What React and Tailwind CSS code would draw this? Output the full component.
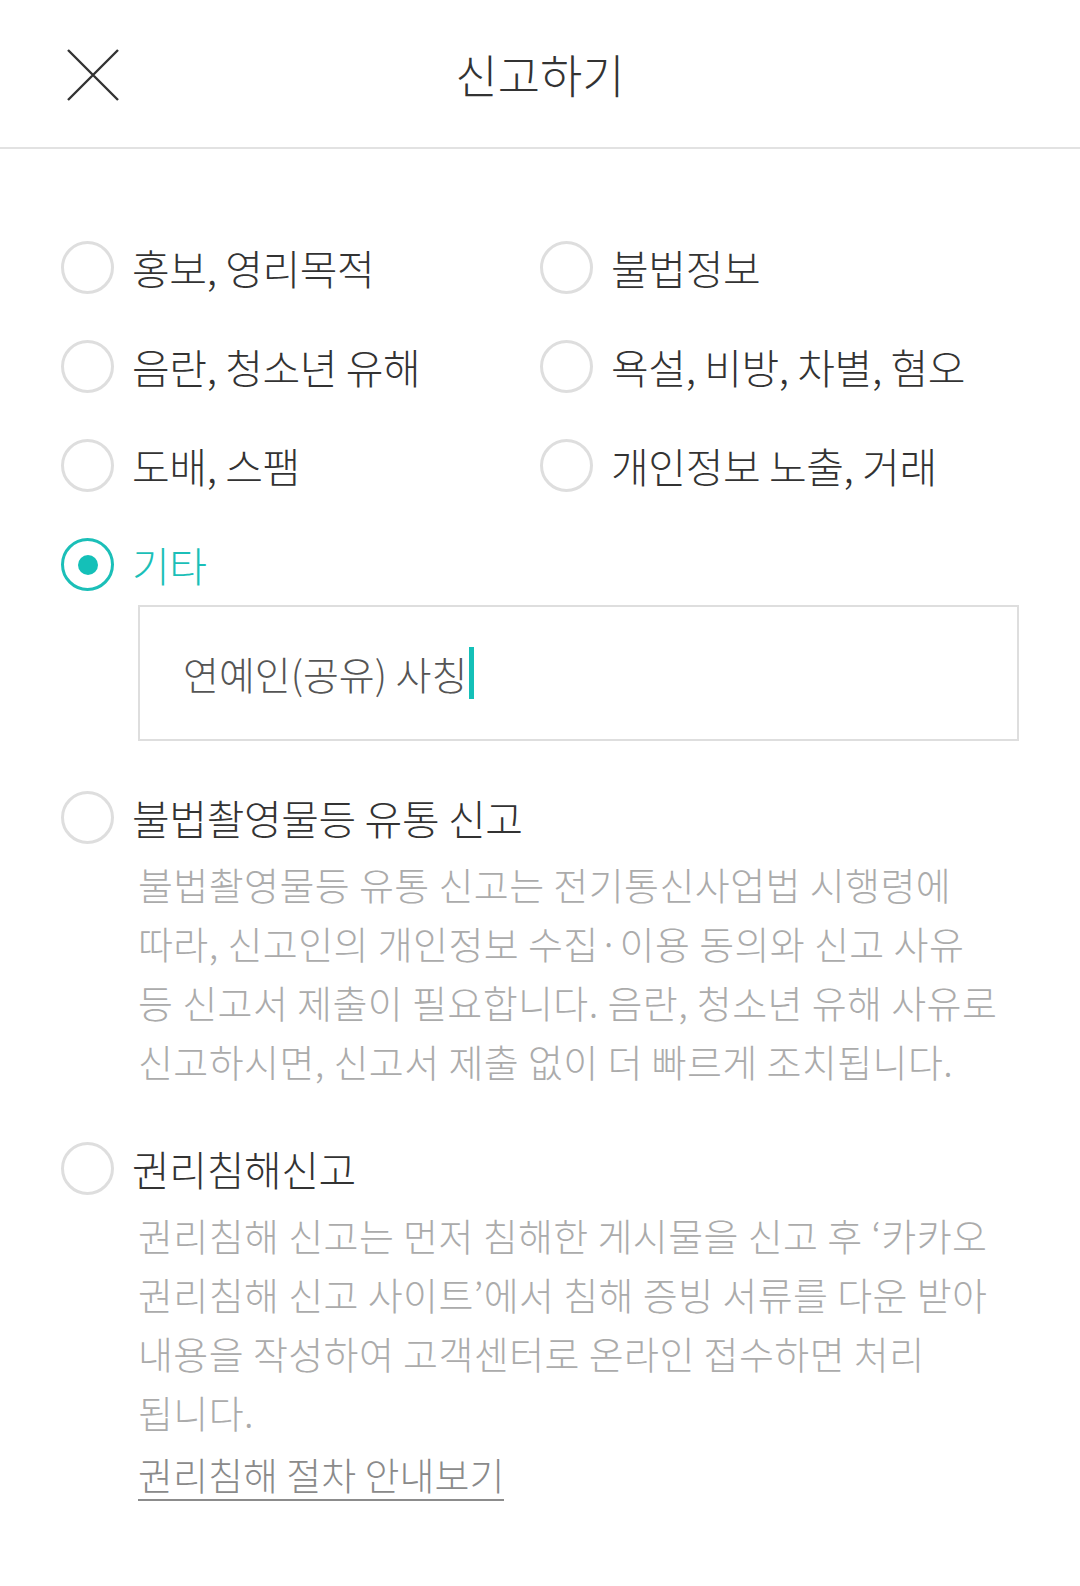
import React from "react";

const FONT = { fontFamily: '"Noto Sans CJK KR", "Noto Sans", sans-serif' };

function Radio({ checked }) {
  return (
    <span
      className={
        "flex h-[53px] w-[53px] shrink-0 items-center justify-center rounded-full border-[3px] " +
        (checked ? "border-[#1bbfb8]" : "border-[#dedede]")
      }
    >
      {checked && <span className="h-[20px] w-[20px] rounded-full bg-[#14c0b8]" />}
    </span>
  );
}

function Option({ label, checked }) {
  return (
    <div className="flex h-[53px] items-center gap-[18px]">
      <Radio checked={checked} />
      <span
        className={
          "whitespace-nowrap text-[41px] font-light tracking-[-0.4px] " +
          (checked ? "text-[#1bbfb8]" : "text-[#333333]")
        }
      >
        {label}
      </span>
    </div>
  );
}

function Desc({ lines }) {
  return (
    <div className="mt-[10px] flex flex-col pl-[77px] text-[38px] font-light leading-[59px] tracking-[0.4px] text-[#ababab]">
      {lines.map((l, i) => (
        <span key={i} className="whitespace-nowrap">
          {l}
        </span>
      ))}
    </div>
  );
}

export default function App() {
  return (
    <div className="min-h-[1586px] w-[1080px] bg-white" style={FONT}>
      <header className="relative flex h-[149px] items-center justify-center border-b-2 border-[#e2e2e2]">
        <button className="absolute left-[67px] top-[49px] h-[52px] w-[52px]">
          <svg viewBox="0 0 52 52" className="h-[52px] w-[52px]">
            <path d="M1 1 L51 51 M51 1 L1 51" stroke="#333" strokeWidth="2.4" fill="none" />
          </svg>
        </button>
        <h1 className="mt-[-1px] text-[46px] font-light text-[#333333]">신고하기</h1>
      </header>

      <main className="pl-[61px] pr-[61px] pt-[92px]">
        <div className="grid grid-cols-[479px_1fr] gap-y-[46px]">
          <Option label="홍보, 영리목적" />
          <Option label="불법정보" />
          <Option label="음란, 청소년 유해" />
          <Option label="욕설, 비방, 차별, 혐오" />
          <Option label="도배, 스팸" />
          <Option label="개인정보 노출, 거래" />
          <Option label="기타" checked />
        </div>

        <div className="ml-[77px] mt-[14px] flex h-[136px] w-[881px] items-center border-2 border-[#dedede] pl-[43px]">
          <span className="text-[39px] font-light text-[#555555]">연예인(공유) 사칭</span>
          <span className="ml-[2px] h-[52px] w-[5px] bg-[#14c0b8]" />
        </div>

        <div className="mt-[50px]">
          <Option label="불법촬영물등 유통 신고" />
          <Desc
            lines={[
              "불법촬영물등 유통 신고는 전기통신사업법 시행령에",
              "따라, 신고인의 개인정보 수집·이용 동의와 신고 사유",
              "등 신고서 제출이 필요합니다. 음란, 청소년 유해 사유로",
              "신고하시면, 신고서 제출 없이 더 빠르게 조치됩니다.",
            ]}
          />
        </div>

        <div className="mt-[52px]">
          <Option label="권리침해신고" />
          <Desc
            lines={[
              "권리침해 신고는 먼저 침해한 게시물을 신고 후 ‘카카오",
              "권리침해 신고 사이트’에서 침해 증빙 서류를 다운 받아",
              "내용을 작성하여 고객센터로 온라인 접수하면 처리",
              "됩니다.",
            ]}
          />
          <div className="mt-[8px] pl-[77px]">
            <a className="inline-block whitespace-nowrap border-b-2 border-[#8c8c8c] text-[38px] font-light leading-[50px] text-[#8a8a8a]">
              권리침해 절차 안내보기
            </a>
          </div>
        </div>
      </main>
    </div>
  );
}
